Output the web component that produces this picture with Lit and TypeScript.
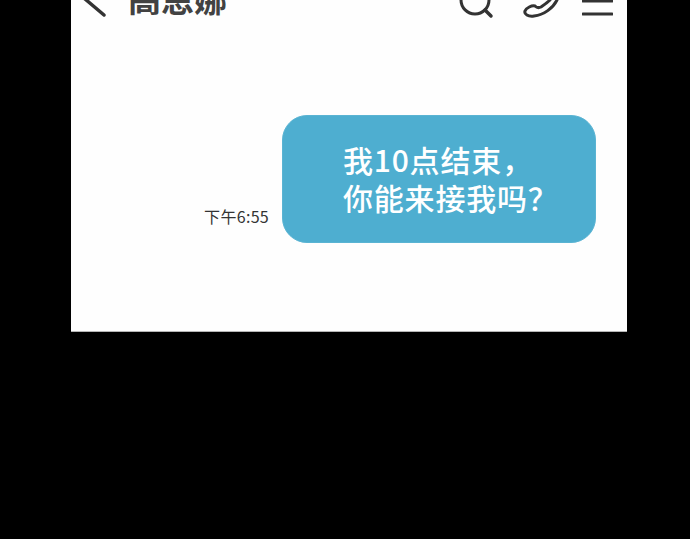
import { LitElement, html, css } from 'lit';
import { customElement } from 'lit/decorators.js';

@customElement('app-root')
export class AppRoot extends LitElement {
  static styles = css`
    :host {
      display: block;
      width: 690px;
      height: 539px;
      background: #000;
      overflow: hidden;
      font-family: "Noto Sans CJK SC", "Noto Sans", sans-serif;
    }

    .panel {
      width: 556px;
      height: 332px;
      margin-left: 71px;
      background: #fefefe;
      border-bottom: 1px solid #b5b5b5;
      box-sizing: border-box;
      overflow: hidden;
    }

    .header {
      display: flex;
      align-items: center;
      height: 50px;
      margin-top: -25px;
      padding: 0 14px 0 12px;
    }

    .back {
      width: 26px;
      height: 50px;
      flex: none;
    }

    .title {
      margin: -5px 0 0 19px;
      font-size: 33px;
      font-weight: 700;
      line-height: 50px;
      color: #424242;
      white-space: nowrap;
    }

    .actions {
      display: flex;
      align-items: center;
      gap: 22px;
      margin-left: auto;
    }

    svg {
      display: block;
      fill: none;
      stroke: #333;
      stroke-width: 3;
      stroke-linecap: round;
      stroke-linejoin: round;
    }

    .row {
      display: flex;
      align-items: flex-end;
      justify-content: flex-end;
      gap: 13px;
      margin-top: 90px;
      padding-right: 31px;
    }

    .time {
      font-size: 16px;
      line-height: 20px;
      color: #333;
      margin-bottom: 17px;
      letter-spacing: 0.3px;
    }

    .bubble {
      width: 314px;
      height: 128px;
      box-sizing: border-box;
      padding: 24px 0 0 60px;
      background: #4eaed0;
      border: 1px solid #5ab4d3;
      border-radius: 25px;
      color: #fff;
      font-size: 30px;
      font-weight: 500;
      letter-spacing: 0.8px;
      line-height: 38px;
      white-space: nowrap;
    }
  `;

  render() {
    return html`
      <div class="panel">
        <div class="header">
          <svg class="back" viewBox="0 0 26 50">
            <path d="M21 40 L2 24" stroke-width="3.5"></path>
          </svg>
          <div class="title">高恩娜</div>
          <div class="actions">
            <svg width="42" height="50" viewBox="0 0 42 50">
              <circle cx="17" cy="25" r="14"></circle>
              <path d="M27 35 L33 41" stroke-width="3.5"></path>
            </svg>
            <svg width="38" height="50" viewBox="0 0 38 50">
              <path d="M35 25 C31 33 22 40 12 41 C6 42 2 39 3 36 C4 33 10 30 13 31 C15 33 17 33 19 32 C22 30 26 27 28 25"></path>
            </svg>
            <svg width="31" height="50" viewBox="0 0 31 50">
              <path d="M1 26 H30 M1 39 H30"></path>
            </svg>
          </div>
        </div>
        <div class="row">
          <div class="time">下午6:55</div>
          <div class="bubble">我10点结束，<br />你能来接我吗？</div>
        </div>
      </div>
    `;
  }
}
